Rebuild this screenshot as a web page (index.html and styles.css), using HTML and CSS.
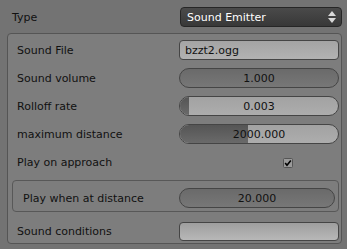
FILE: index.html
```html
<!DOCTYPE html>
<html lang="en">
<head>
    <meta charset="UTF-8">
    <title>Sound Emitter</title>
    <link rel="stylesheet" href="styles.css">
</head>
<body>
<div class="panel">
    <!-- Type selector -->
    <div class="row type-row">
        <span class="label">Type</span>
        <div class="menu">
            <span>Sound Emitter</span>
            <svg class="arrows" width="8" height="12" viewBox="0 0 8 12">
                <path d="M4 0 L8 5 L0 5 Z" fill="#d8d8d8"/>
                <path d="M0 7 L8 7 L4 12 Z" fill="#d8d8d8"/>
            </svg>
        </div>
    </div>

    <!-- Emitter settings -->
    <div class="box">
        <div class="row">
            <span class="label">Sound File</span>
            <div class="field text">bzzt2.ogg</div>
        </div>
        <div class="row">
            <span class="label">Sound volume</span>
            <div class="field number">1.000</div>
        </div>
        <div class="row">
            <span class="label">Rolloff rate</span>
            <div class="field slider">
                <div class="fill" style="width: 6%"></div>
                <span>0.003</span>
            </div>
        </div>
        <div class="row">
            <span class="label">maximum distance</span>
            <div class="field slider">
                <div class="fill" style="width: 43%"></div>
                <span>2000.000</span>
            </div>
        </div>
        <div class="row">
            <span class="label">Play on approach</span>
            <div class="check-cell">
                <svg class="check" width="10" height="10" viewBox="0 0 10 10">
                    <rect x="0.5" y="0.5" width="9" height="9" rx="1" fill="#9a9a9a" stroke="#555"/>
                    <path d="M2.2 5 L4 7.2 L7.8 2.6" fill="none" stroke="#000" stroke-width="1.6"/>
                </svg>
            </div>
        </div>
        <div class="subbox">
            <div class="row">
                <span class="label">Play when at distance</span>
                <div class="field number">20.000</div>
            </div>
        </div>
        <div class="row last">
            <span class="label">Sound conditions</span>
            <div class="field text empty"></div>
        </div>
    </div>
</div>
</body>
</html>
```

FILE: styles.css
```css
body {
    margin: 0;
    background-color: #737373;
    font-family: "DejaVu Sans", Verdana, sans-serif;
    font-size: 11px;
    color: #111;
}

.panel {
    width: 347px;
    height: 249px;
    padding: 7px 5px 0 7px;
    box-sizing: border-box;
}

.row {
    display: flex;
    align-items: center;
    height: 20px;
    margin-bottom: 8px;
}

.label {
    flex: 1;
    padding-left: 10px;
    white-space: nowrap;
}

.type-row {
    margin-bottom: 6px;
}

.type-row .label {
    padding-left: 5px;
}

/* Dropdown */
.menu {
    width: 162px;
    height: 20px;
    box-sizing: border-box;
    display: flex;
    align-items: center;
    justify-content: space-between;
    padding: 0 5px 0 6px;
    color: #fff;
    background: linear-gradient(#4a4a4a, #383838);
    border: 1px solid #262626;
    border-radius: 4px;
}

/* Outer box */
.box {
    border: 1px solid #555;
    border-radius: 4px;
    background-color: #7d7d7d;
    padding: 6px 2px 2px 0;
    height: 211px;
    box-sizing: border-box;
}

.box > .row .label {
    padding-left: 9px;
}

.field {
    width: 160px;
    height: 20px;
    box-sizing: border-box;
    border: 1px solid #454545;
    position: relative;
    overflow: hidden;
    display: flex;
    align-items: center;
    justify-content: center;
}

.text {
    justify-content: flex-start;
    padding-left: 5px;
    border-radius: 4px;
    background: linear-gradient(#a4a4a4, #b2b2b2);
}

.empty {
    height: 19px;
    background: linear-gradient(#9e9e9e, #b8b8b8);
}

.number {
    border-radius: 10px;
    background: linear-gradient(#6a6a6a, #777);
}

.slider {
    border-radius: 10px;
    background: linear-gradient(#a2a2a2, #adadad);
}

.slider .fill {
    position: absolute;
    left: 0;
    top: 0;
    bottom: 0;
    background: linear-gradient(#555, #6a6a6a);
}

.slider span {
    position: relative;
}

.check-cell {
    width: 160px;
    display: flex;
    padding-left: 104px;
    box-sizing: border-box;
}

.check {
    display: block;
    margin-top: 1px;
}

/* Inner box */
.subbox {
    margin: 0 0 9px 4px;
    border: 1px solid #585858;
    border-radius: 4px;
    padding: 7px 3px 3px 0;
}

.subbox .row {
    margin-bottom: 0;
}

.subbox .row .field {
    width: 156px;
}

.row.last {
    margin-bottom: 0;
}
```
